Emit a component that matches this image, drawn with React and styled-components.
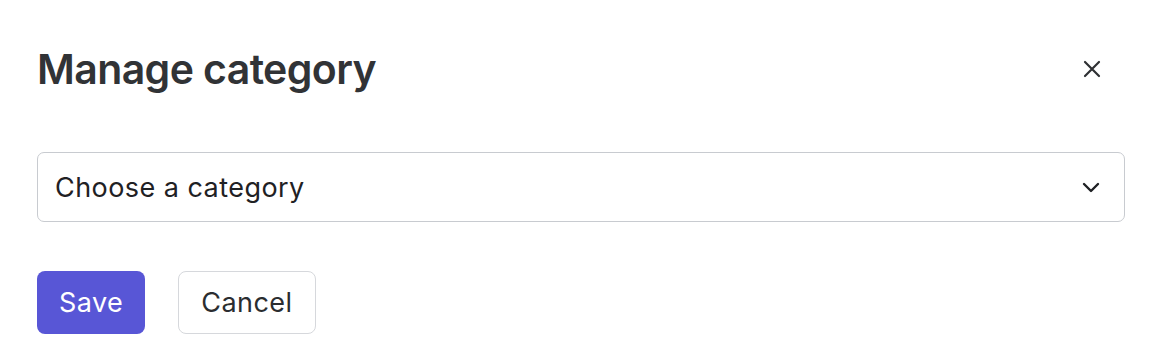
import React from "react";
import styled, { createGlobalStyle } from "styled-components";

const Global = createGlobalStyle`
  html, body { margin: 0; padding: 0; background: #fff; }
  body { font-family: Inter, "Noto Sans", sans-serif; -webkit-font-smoothing: antialiased; }
  * { box-sizing: border-box; }
`;

const Dialog = styled.div`
  width: 1162px;
  padding: 40px 37px 24px 37px;
  display: flex;
  flex-direction: column;
`;

const Header = styled.div`
  display: flex;
  align-items: center;
  justify-content: space-between;
  height: 58px;
`;

const Title = styled.h2`
  margin: 0;
  font-size: 41px;
  font-weight: 600;
  color: #313336;
  letter-spacing: -0.6px;
`;

const CloseButton = styled.button`
  border: none;
  background: transparent;
  padding: 0;
  width: 40px;
  height: 40px;
  margin-right: 13px;
  display: flex;
  align-items: center;
  justify-content: center;
  color: #2f3134;
  cursor: pointer;
`;

const Select = styled.div`
  margin-top: 54px;
  height: 70px;
  border: 1.5px solid #c8cbd0;
  border-radius: 7px;
  display: flex;
  align-items: center;
  justify-content: space-between;
  padding: 0 24px 0 17px;
  font-size: 27px;
  letter-spacing: 0.45px;
  color: #1f2124;
`;

const Actions = styled.div`
  margin-top: 49px;
  display: flex;
  gap: 33px;
`;

const Button = styled.button`
  height: 63px;
  padding: 0 22px;
  border-radius: 8px;
  font-family: inherit;
  font-size: 27px;
  letter-spacing: 0.45px;
  font-weight: 400;
  cursor: pointer;
  border: ${(p) => (p.$primary ? "none" : "1.5px solid #d6d8dc")};
  background: ${(p) => (p.$primary ? "#5856d6" : "#fff")};
  color: ${(p) => (p.$primary ? "#fff" : "#2b2d30")};
`;

export default function App() {
  return (
    <>
      <Global />
      <Dialog>
        <Header>
          <Title>Manage category</Title>
          <CloseButton aria-label="Close">
            <svg width="18" height="18" viewBox="0 0 18 18" fill="none" stroke="currentColor" strokeWidth="2.2" strokeLinecap="round">
              <path d="M2 2L16 16M16 2L2 16" />
            </svg>
          </CloseButton>
        </Header>
        <Select>
          <span>Choose a category</span>
          <svg width="18" height="11" viewBox="0 0 18 11" fill="none" stroke="#1f2124" strokeWidth="2.4" strokeLinecap="round" strokeLinejoin="round">
            <path d="M2 2L9 9L16 2" />
          </svg>
        </Select>
        <Actions>
          <Button $primary>Save</Button>
          <Button>Cancel</Button>
        </Actions>
      </Dialog>
    </>
  );
}
